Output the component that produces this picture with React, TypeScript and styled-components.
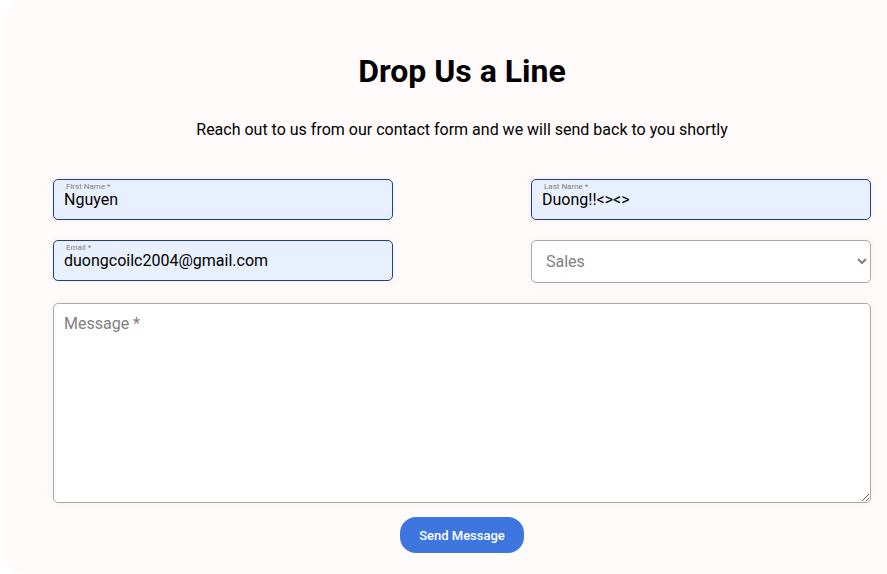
import React, { useState } from "react";
import styled, { createGlobalStyle, css } from "styled-components";

const GlobalStyle = createGlobalStyle`
  *, *::before, *::after { box-sizing: border-box; }
  body {
    margin: 0;
    background: #fff;
    color: #000;
    font-family: Roboto, "Liberation Sans", sans-serif;
    font-size: 16px;
  }
`;

const Page = styled.main`
  padding: 2px 0 0 3px;
`;

const Card = styled.section`
  padding: 48px 16px 20px 50px;
  background: #fffbfa;
  border-radius: 20px 0 0 20px;
`;

const Title = styled.h1`
  margin: 0;
  font-size: 32px;
  font-weight: 700;
  line-height: 42px;
  text-align: center;
`;

const Lead = styled.p`
  margin: 28px 0 39px;
  line-height: 20px;
  text-align: center;
`;

const Form = styled.form`
  display: grid;
  grid-template-columns: 1fr 1fr;
  align-items: start;
  gap: 20px 138px;
`;

const Field = styled.div<{ $wide?: boolean }>`
  position: relative;
  display: flex;
  ${({ $wide }) => $wide && css`grid-column: 1 / -1;`}
`;

const controlStyle = css`
  width: 100%;
  margin: 0;
  border: 1px solid #aaa;
  border-radius: 5px;
  background: #fff;
  box-shadow: 0 0 10px rgba(0, 0, 0, 0.05);
  font: inherit;
  outline: none;
`;

const TextInput = styled.input`
  ${controlStyle}
  height: 41px;
  padding: 0 10px;
  border-color: #1f3f7f;
  background: #e8f0fe;
  color: #000;
`;

const FloatingLabel = styled.label`
  position: absolute;
  top: 3px;
  left: 13px;
  color: #808080;
  font-size: 8px;
  line-height: 10px;
`;

const Select = styled.select`
  ${controlStyle}
  height: 43px;
  padding: 0 10px;
  color: #808080;
`;

const MessageBox = styled.textarea`
  ${controlStyle}
  display: block;
  height: 200px;
  padding: 10px;
  line-height: 20px;
  resize: vertical;

  &::placeholder { color: #808080; opacity: 1; }
`;

const Actions = styled.div`
  display: flex;
  justify-content: center;
  margin-top: 14px;
`;

const SendButton = styled.button`
  height: 36px;
  padding: 0 19px;
  border: 0;
  border-radius: 16px;
  background: #3e76df;
  color: #fff;
  font: 500 13px Roboto, "Liberation Sans", sans-serif;
  cursor: pointer;
`;

interface TextFieldProps {
  id: string;
  label: string;
  initial: string;
  type?: string;
}

function TextField({ id, label, initial, type = "text" }: TextFieldProps) {
  const [value, setValue] = useState(initial);
  return (
    <Field>
      <TextInput id={id} name={id} type={type} required value={value} onChange={(e) => setValue(e.target.value)} />
      <FloatingLabel htmlFor={id}>{label} *</FloatingLabel>
    </Field>
  );
}

export default function App() {
  return (
    <>
      <GlobalStyle />
      <Page>
        <Card>
          <Title>Drop Us a Line</Title>
          <Lead>Reach out to us from our contact form and we will send back to you shortly</Lead>
          <Form id="contact" onSubmit={(e) => e.preventDefault()}>
            <TextField id="firstName" label="First Name" initial="Nguyen" />
            <TextField id="lastName" label="Last Name" initial="Duong!!<><>" />
            <TextField id="email" label="Email" type="email" initial="duongcoilc2004@gmail.com" />
            <Field>
              <Select name="department" aria-label="Department" defaultValue="sales">
                <option value="sales">Sales</option>
              </Select>
            </Field>
            <Field $wide>
              <MessageBox name="message" aria-label="Message" placeholder="Message *" required />
            </Field>
          </Form>
          <Actions>
            <SendButton type="submit" form="contact">Send Message</SendButton>
          </Actions>
        </Card>
      </Page>
    </>
  );
}
